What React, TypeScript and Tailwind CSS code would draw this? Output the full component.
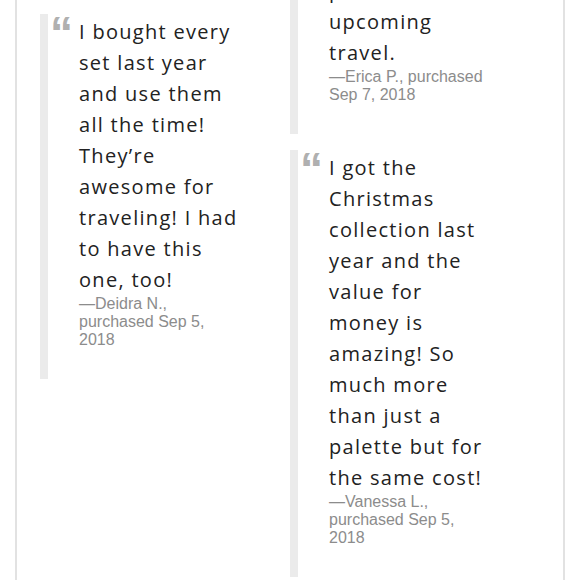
import React from 'react';

type Review = {
  lines: string[];
  author: string[];
};

const left: Review[] = [
  {
    lines: [
      'I bought every',
      'set last year',
      'and use them',
      'all the time!',
      'They\u2019re',
      'awesome for',
      'traveling! I had',
      'to have this',
      'one, too!',
    ],
    author: ['\u2014Deidra N.,', 'purchased Sep 5,', '2018'],
  },
];

const right: Review[] = [
  {
    lines: ['perfect for', 'upcoming', 'travel.'],
    author: ['\u2014Erica P., purchased', 'Sep 7, 2018'],
  },
  {
    lines: [
      'I got the',
      'Christmas',
      'collection last',
      'year and the',
      'value for',
      'money is',
      'amazing! So',
      'much more',
      'than just a',
      'palette but for',
      'the same cost!',
    ],
    author: ['\u2014Vanessa L.,', 'purchased Sep 5,', '2018'],
  },
];

const Card = ({ review }: { review: Review }) => (
  <div className="flex border-l-8 border-[#ebebeb] pb-[30px]">
    <div className="w-[31px] shrink-0 pl-[2px]">
      <span
        className="block h-[20px] text-[46px] font-bold leading-[50px] text-[#b0b0b0]"
        style={{ fontFamily: '"Liberation Sans", Arial, sans-serif', marginTop: -6 }}
      >
        {'\u201C'}
      </span>
    </div>
    <div className="pt-[2px]">
      <div
        className="text-[20px] leading-[31px] tracking-[1.3px] text-[#222]"
        style={{ fontFamily: '"Open Sans", sans-serif' }}
      >
        {review.lines.map((line, i) => (
          <div key={i} className="whitespace-nowrap">
            {line}
          </div>
        ))}
      </div>
      <div
        className="text-[16px] leading-[18px] text-[#8c8c8c]"
        style={{ fontFamily: '"Liberation Sans", Arial, sans-serif' }}
      >
        {review.author.map((line, i) => (
          <div key={i} className="whitespace-nowrap">
            {line}
          </div>
        ))}
      </div>
    </div>
  </div>
);

export default function App() {
  return (
    <div className="h-[580px] w-[580px] overflow-hidden bg-white">
      <div className="ml-[15px] flex h-full w-[550px] items-start border-x-2 border-[#e2e2e2] pl-[23px]">
        <div className="w-[250px] pt-[14px]">
          {left.map((r, i) => (
            <Card key={i} review={r} />
          ))}
        </div>
        <div className="mt-[-27px] flex w-[250px] flex-col gap-4">
          {right.map((r, i) => (
            <Card key={i} review={r} />
          ))}
        </div>
      </div>
    </div>
  );
}
